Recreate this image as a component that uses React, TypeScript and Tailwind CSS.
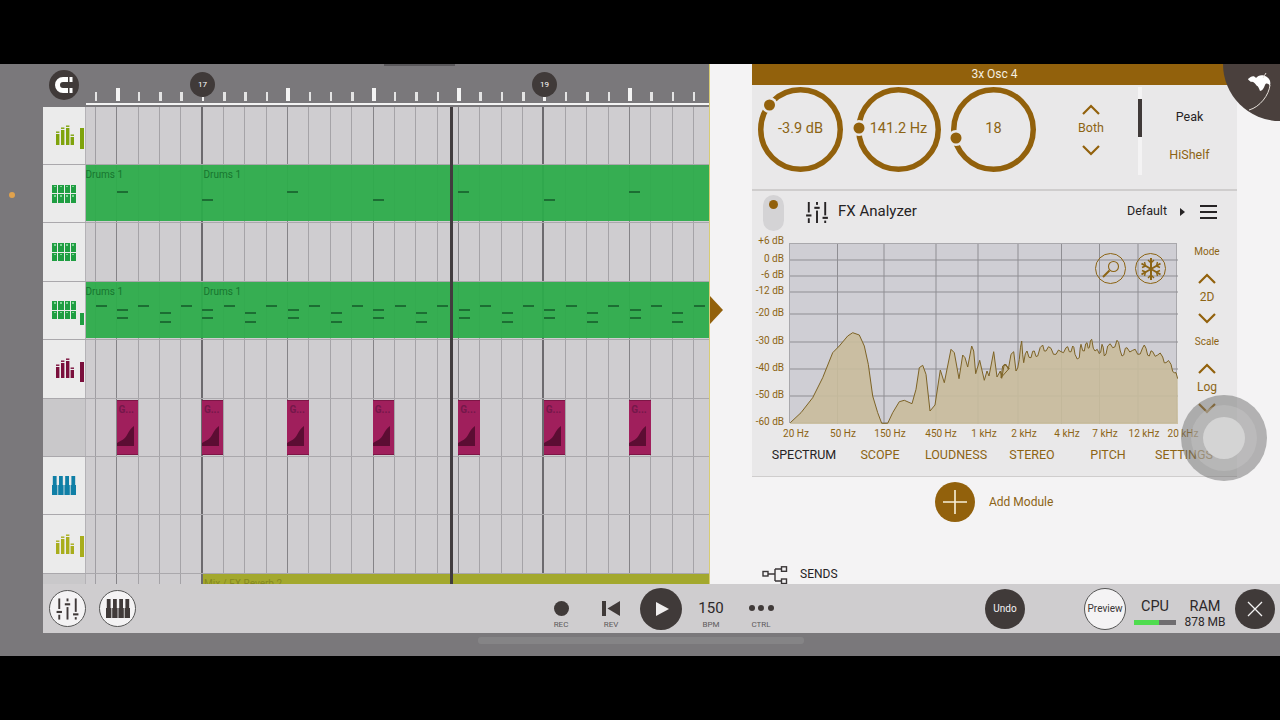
import React from 'react'

const BROWN = '#92610c'
const DARK = '#403a39'

const BEAT = 21.37
const BAR_STARTS = [117, 202.4, 287.9, 373.3, 458.8, 544.2, 629.7]

// zoomed trace of the spectrum, low end then high end
const LOW = [[118,575],[150,545],[185,500],[215,440],[245,365],[265,345],[290,315],[305,305],[325,312],[340,345],[352,400],[365,495],[380,545],[392,577],[410,577],[425,545],[445,512],[460,508],[483,518],[495,475],[505,410],[515,403],[525,430],[537,540],[552,522],[568,417],[580,455],[600,355],[610,365],[624,443],[635,372],[642,380],[650,408],[662,345],[668,360],[674,428],[686,388],[700,448],[708,420],[714,435],[728,362],[738,438],[748,420],[752,442],[760,400],[775,412]]
const HIGH = [[0,440],[5,405],[15,400],[22,415],[30,370],[38,362],[45,420],[55,385],[62,330],[68,395],[78,360],[90,380],[100,360],[110,375],[125,342],[135,360],[150,352],[165,370],[180,362],[195,350],[205,362],[215,345],[222,370],[235,380],[240,340],[250,360],[258,335],[265,350],[272,325],[282,360],[295,368],[303,340],[310,375],[320,345],[335,350],[348,328],[358,360],[368,372],[378,350],[395,358],[410,370],[425,350],[435,352],[445,375],[455,362],[470,372],[485,378],[495,395],[510,400],[520,425],[530,443]]

// the top end is much spikier than the trace, so add a small zigzag between its points
const HIGH_FINE = HIGH.flatMap(([x, y], i) => {
  const next = HIGH[i + 1]
  if (!next || i < 6) return [[x, y]]
  return [[x, y], [(x + next[0]) / 2, (y + next[1]) / 2 + (i % 2 === 0 ? 9 : -9)]]
})

const TRACE = [
  ...LOW.map(([x, y]) => `${(750 + x / 3).toFixed(1)},${(230 + y / 3).toFixed(1)}`),
  ...HIGH_FINE.map(([x, y]) => `${(1000 + x / 3).toFixed(1)},${(230 + y / 3).toFixed(1)}`),
].join(' ')

const DB_LINES = [
  { label: '+6 dB', y: 241 },
  { label: '0 dB', y: 259 },
  { label: '-6 dB', y: 275 },
  { label: '-12 dB', y: 291 },
  { label: '-20 dB', y: 313 },
  { label: '-30 dB', y: 341 },
  { label: '-40 dB', y: 368 },
  { label: '-50 dB', y: 395 },
  { label: '-60 dB', y: 422 },
]
const HZ_LINES = [836.5, 883, 935, 977, 1017, 1060.5, 1098.5, 1137]
const HZ_LABELS = [
  ['20 Hz', 796], ['50 Hz', 843], ['150 Hz', 890], ['450 Hz', 941], ['1 kHz', 984],
  ['2 kHz', 1024], ['4 kHz', 1067], ['7 kHz', 1105], ['12 kHz', 1144], ['20 kHz', 1183],
] as const
const TABS = ['SPECTRUM', 'SCOPE', 'LOUDNESS', 'STEREO', 'PITCH', 'SETTINGS']

function Bars({ color }: { color: string }) {
  return (
    <svg width="20" height="21" viewBox="0 0 20 21" fill={color}>
      <rect x="1" y="9" width="3.4" height="11" />
      <rect x="1" y="6.5" width="3.4" height="1.4" />
      <rect x="6" y="5" width="3.4" height="15" />
      <rect x="6" y="2.5" width="3.4" height="1.4" />
      <rect x="11" y="3" width="3.4" height="17" />
      <rect x="11" y="0.5" width="3.4" height="1.4" />
      <rect x="15.6" y="12" width="3.4" height="8" />
      <rect x="15.6" y="9.5" width="3.4" height="1.4" />
    </svg>
  )
}

function DrumGrid() {
  return (
    <div className="grid grid-cols-4 gap-[1px] w-[24px]">
      {Array.from({ length: 8 }).map((_, i) => (
        <div key={i} className="h-[8.5px] bg-[#1f9e42] border-t-[3px] border-[#1f9e42] relative">
          <div className="absolute left-[1.5px] top-[-2px] w-[2px] h-[1.5px] bg-[#7fd596]" />
        </div>
      ))}
    </div>
  )
}

function Piano({ color, w, h }: { color: string; w: number; h: number }) {
  return (
    <svg width={w} height={h} viewBox="0 0 24 19" fill={color}>
      {[0, 6.2, 12.4, 18.6].map((x) => (
        <rect key={x} x={x} y="9" width="5.4" height="10" />
      ))}
      {[0.8, 7, 13.2, 19.4].map((x) => (
        <rect key={x} x={x} y="0" width="3.8" height="12" />
      ))}
    </svg>
  )
}

function Mixer({ color, w, h }: { color: string; w: number; h: number }) {
  return (
    <svg width={w} height={h} viewBox="0 0 24 22" fill={color}>
      <rect x="2.4" y="0" width="2" height="11" />
      <rect x="0.6" y="13" width="5.6" height="2.2" />
      <rect x="2.4" y="17" width="2" height="5" />
      <rect x="11" y="0" width="2" height="3" />
      <rect x="9.2" y="5" width="5.6" height="2.2" />
      <rect x="11" y="9" width="2" height="13" />
      <rect x="19.6" y="0" width="2" height="14" />
      <rect x="17.8" y="15.5" width="5.6" height="2.2" />
      <rect x="19.6" y="19.5" width="2" height="2.5" />
    </svg>
  )
}

function Chevron({ up }: { up?: boolean }) {
  return (
    <svg width="18" height="11" viewBox="0 0 18 11" fill="none" stroke={BROWN} strokeWidth="2.2">
      <polyline points={up ? '1,10 9,2 17,10' : '1,1 9,9 17,1'} />
    </svg>
  )
}

function Knob({ value, dx, dy }: { value: string; dx: number; dy: number }) {
  return (
    <div className="grid w-[85px] h-[85px] place-items-center shrink-0">
      <svg width="85" height="85" viewBox="0 0 85 85" className="[grid-area:1/1] overflow-visible">
        <circle cx="42.5" cy="42.5" r="39.75" fill="none" stroke={BROWN} strokeWidth="5.5" />
        <circle cx={dx} cy={dy} r="8" fill="#e9e8e9" />
        <circle cx={dx} cy={dy} r="5.5" fill={BROWN} />
      </svg>
      <span className="[grid-area:1/1] mb-[2px] text-[14.5px] text-[#8c6414]">{value}</span>
    </div>
  )
}

function GridRow({ children, header, shaded, height = 'h-[58.4px]' }: {
  children?: React.ReactNode
  header?: React.ReactNode
  shaded?: boolean
  height?: string
}) {
  return (
    <div className={`flex ${height} shrink-0 border-b border-[#aaa8ac]`}>
      <div className={`relative w-[42.5px] shrink-0 flex items-center border-r border-[#b4b2b6] ${shaded ? 'bg-[#c9c8ca]' : 'bg-[#ebebeb]'}`}>
        {header}
      </div>
      <div className="relative flex flex-1 overflow-hidden bg-[#cfcdd0]">
        <div className="w-[10.4px] shrink-0 border-r border-[#a09ea3]" />
        {Array.from({ length: 29 }).map((_, i) => (
          <div
            key={i}
            style={{ width: BEAT }}
            className={`shrink-0 border-r ${i % 16 === 4 ? 'border-r-[2px] border-[#6c6a6e]' : i % 4 === 0 ? 'border-[#858387]' : 'border-[#a5a3a7]'}`}
          />
        ))}
        {children}
      </div>
    </div>
  )
}

function DrumClip({ notes }: { notes: { x: number; y: number }[] }) {
  return (
    <div className="absolute left-0 right-0 top-0 bottom-[1px] bg-[#2dac4b]/95">
      <span className="absolute left-0 top-[4px] text-[10px] leading-[12px] text-[#17752f]">Drums 1</span>
      <span className="absolute left-[118px] top-[4px] text-[10px] leading-[12px] text-[#17752f]">Drums 1</span>
      {notes.map((n, i) => (
        <div key={i} className="absolute w-[11px] h-[2px] bg-[#1c6e33]" style={{ left: n.x - 86, top: n.y }} />
      ))}
    </div>
  )
}

const ROW2_NOTES = BAR_STARTS.map((x, i) => ({ x, y: i % 2 === 0 ? 26 : 34 }))

// the pattern repeats every bar-quarter: one high note, two low, one high, two lower
const ROW4_NOTES = Array.from({ length: 29 }).flatMap((_, i) => {
  const x = 96 + i * BEAT
  const ys = [[23], [27.5, 35], [23], [30.5, 39]][i % 4]
  return ys.map((y) => ({ x, y }))
})

function GateClip({ x }: { x: number }) {
  return (
    <div className="absolute top-[1px] h-[55.5px] w-[21.4px] bg-[#a01f5c] border-t border-b border-[#7d1646] overflow-hidden" style={{ left: x - 86 }}>
      <span className="absolute left-[2px] top-[3px] text-[10px] leading-[12px] font-bold text-[#74184a]">G...</span>
      <svg className="absolute left-0 top-[25px]" width="21" height="20" viewBox="0 0 21 20" fill="#5c0d33">
        <path d="M0 20 L0 17 C5 14 8 13 10 9 C12 5 14 2 17 0 L17 20 Z" />
      </svg>
    </div>
  )
}

function Ruler() {
  return (
    <div className="relative h-[43px] shrink-0 bg-[#7a787b] flex flex-col justify-end pb-[2px]">
      <div className="absolute left-[341px] top-0 w-[71px] h-[2px] bg-[#59575a]" />
      <div className="flex items-end h-[16px] pl-[42.5px]">
        {Array.from({ length: 29 }).map((_, i) => {
          const isBar = i % 16 === 5
          const isBig = i % 4 === 1 && !isBar
          return (
            <div key={i} style={{ width: BEAT }} className="shrink-0 flex justify-center">
              <div className={isBig ? 'w-[4px] h-[13px] bg-[#f4f4f4]' : isBar ? 'w-[2.5px] h-[4px] bg-[#f4f4f4]' : 'w-[2.5px] h-[9px] bg-[#e4e4e4]'} />
            </div>
          )
        })}
      </div>
      <div className="ml-[42.5px] h-[2.5px] mt-[2px] bg-[#f4f4f4]" />
      {[[17, 147], [19, 489]].map(([n, left]) => (
        <div
          key={n}
          className="absolute top-[8px] w-[25px] h-[25px] rounded-full flex items-center justify-center text-[8px] text-white"
          style={{ left, backgroundColor: DARK }}
        >
          {n}
        </div>
      ))}
      <div className="absolute left-[6px] top-[6px] w-[30px] h-[30px] rounded-full flex items-center justify-center" style={{ backgroundColor: DARK }}>
        <svg width="22" height="20" viewBox="0 0 22 20" fill="none">
          <path d="M15 4.5 H10 A5.5 5.5 0 0 0 10 15.5 H15" stroke="white" strokeWidth="5" />
          <rect x="16.5" y="2" width="3" height="5" fill="white" />
          <rect x="16.5" y="13" width="3" height="5" fill="white" />
        </svg>
      </div>
    </div>
  )
}

function Timeline() {
  return (
    <div className="relative w-[666px] shrink-0 flex flex-col overflow-hidden bg-[#7a787b]">
      <Ruler />
      <GridRow height="h-[58px]" header={
        <>
          <div className="ml-[12px]"><Bars color="#7fa30c" /></div>
          <div className="absolute left-[37px] top-[21px] w-[4px] h-[21px] bg-[#7fa30c]" />
        </>
      } />
      <GridRow header={<div className="ml-[9px]"><DrumGrid /></div>}>
        <DrumClip notes={ROW2_NOTES} />
      </GridRow>
      <GridRow header={<div className="ml-[9px]"><DrumGrid /></div>} />
      <GridRow header={
        <>
          <div className="ml-[9px]"><DrumGrid /></div>
          <div className="absolute left-[37px] top-[31px] w-[3.5px] h-[12px] bg-[#1f9e42]" />
        </>
      }>
        <DrumClip notes={ROW4_NOTES} />
      </GridRow>
      <GridRow header={
        <>
          <div className="ml-[12px]"><Bars color="#7a0f3c" /></div>
          <div className="absolute left-[37px] top-[22px] w-[4px] h-[20px] bg-[#7a0f3c]" />
        </>
      } />
      <GridRow shaded>
        {BAR_STARTS.map((x) => <GateClip key={x} x={x} />)}
      </GridRow>
      <GridRow header={<div className="ml-[9px]"><Piano color="#0f7fa6" w={24} h={19} /></div>} />
      <GridRow header={
        <>
          <div className="ml-[12px]"><Bars color="#a8ad1c" /></div>
          <div className="absolute left-[37px] top-[21px] w-[4px] h-[21px] bg-[#a8ad1c]" />
        </>
      } />
      <GridRow shaded height="h-[11px]">
        <div className="absolute left-[117.5px] right-0 top-0 bottom-0 bg-[#a3a82d] overflow-hidden">
          <span className="absolute left-[1px] top-[4px] text-[10px] leading-[12px] text-[#85881f] whitespace-nowrap">Mix / FX Reverb 2</span>
        </div>
      </GridRow>
      {/* playhead */}
      <div className="absolute left-[406.5px] top-[43px] bottom-0 w-[3.5px] bg-[#413c3e]" />
    </div>
  )
}

function Plot() {
  return (
    <div className="relative w-[388px] h-[180px] mt-[8px] shrink-0 bg-[#cfced4] border border-[#a9a8ac]">
      <svg className="absolute inset-0" width="388" height="180" viewBox="789 243 388 180">
        {DB_LINES.slice(1, -1).map((l) => (
          <line key={l.y} x1="789" x2="1177" y1={l.y} y2={l.y} stroke="#8f8e93" strokeWidth="1" />
        ))}
        {HZ_LINES.map((x) => (
          <line key={x} x1={x} x2={x} y1="243" y2="423" stroke="#8f8e93" strokeWidth="1" />
        ))}
        <polygon points={`789.3,423 ${TRACE} 1177,423`} fill="#c9bd9c" fillOpacity="0.9" />
        <polyline points={TRACE} fill="none" stroke="#7d6326" strokeWidth="1" />
      </svg>
      <div className="absolute left-[305px] top-[9px] w-[31px] h-[31px] rounded-full border border-[#8c6414] flex items-center justify-center">
        <svg width="22" height="22" viewBox="0 0 22 22" fill="none" stroke="#8c6414">
          <circle cx="13.5" cy="8.5" r="5" strokeWidth="1.1" />
          <path d="M9.5 12.5 L3 19" strokeWidth="2" />
        </svg>
      </div>
      <div className="absolute left-[345px] top-[9px] w-[31px] h-[31px] rounded-full border border-[#8c6414] flex items-center justify-center">
        <svg width="24" height="24" viewBox="0 0 24 24" fill="none" stroke="#8c6414" strokeWidth="2">
          <path d="M12 1 V23 M2.5 6.5 L21.5 17.5 M21.5 6.5 L2.5 17.5" />
          <path d="M9 3 L12 6 L15 3 M9 21 L12 18 L15 21 M3 10.5 L6.5 9 L5.5 5 M21 10.5 L17.5 9 L18.5 5 M3 13.5 L6.5 15 L5.5 19 M21 13.5 L17.5 15 L18.5 19" strokeWidth="1.4" />
        </svg>
      </div>
    </div>
  )
}

function Analyzer() {
  return (
    <div className="flex flex-col bg-[#e9e8e9] border-b border-[#cfcdcd]">
      <div className="relative flex h-[198px]">
        <div className="w-[37px] shrink-0 relative">
          {DB_LINES.map((l) => (
            <span
              key={l.label}
              className="absolute right-[5px] text-[10px] leading-[12px] text-[#8c6414] whitespace-nowrap"
              style={{ top: l.y - 235 - 6 }}
            >
              {l.label}
            </span>
          ))}
        </div>
        <Plot />
        <div className="flex-1 flex flex-col items-center pt-[11px] text-[#8c6414]">
          <span className="text-[10px] leading-[12px]">Mode</span>
          <div className="mt-[14.5px]"><Chevron up /></div>
          <span className="text-[12px] leading-[14px] mt-[6.5px]">2D</span>
          <div className="mt-[8.5px]"><Chevron /></div>
          <span className="text-[10px] leading-[12px] mt-[12.5px]">Scale</span>
          <div className="mt-[14.5px]"><Chevron up /></div>
          <span className="text-[12px] leading-[14px] mt-[6.5px]">Log</span>
          <div className="mt-[8.5px]"><Chevron /></div>
        </div>
        {HZ_LABELS.map(([t, x]) => (
          <span
            key={t}
            className="absolute top-[193px] -translate-x-1/2 text-[10px] leading-[12px] text-[#8c6414] whitespace-nowrap"
            style={{ left: x - 752 }}
          >
            {t}
          </span>
        ))}
      </div>
      <div className="grid grid-cols-6 w-[456px] ml-[14px] h-[43px] pt-[14px]">
        {TABS.map((t, i) => (
          <span key={t} className={`text-center text-[12.5px] leading-[16px] ${i === 0 ? 'text-[#262324]' : 'text-[#8c6414]'}`}>{t}</span>
        ))}
      </div>
    </div>
  )
}

function RightPanel() {
  return (
    <div className="relative flex-1 bg-[#f4f3f4] border-l border-[#d8cc74] overflow-hidden pl-[42px]">
      <div className="w-[485px] flex flex-col">
        <div className="h-[21px] flex items-center justify-center pb-[2px] text-[12px] text-[#f5efe0]" style={{ backgroundColor: BROWN }}>3x Osc 4</div>
        <div className="h-[106px] bg-[#e9e8e9] border-b-[2px] border-[#cfcdcd] flex items-start pt-[2px] pl-[6px]">
          <Knob value="-3.9 dB" dx={11.5} dy={18} />
          <div className="w-[13px] shrink-0" />
          <Knob value="141.2 Hz" dx={3} dy={41} />
          <div className="w-[10px] shrink-0" />
          <Knob value="18" dx={5} dy={51} />
          <div className="w-[40px] shrink-0 ml-[35px] flex flex-col items-center pt-[16.5px] text-[#8c6414]">
            <Chevron up />
            <span className="text-[12.5px] leading-[16px] mt-[5.5px]">Both</span>
            <div className="mt-[8.5px]"><Chevron /></div>
          </div>
          <div className="ml-[27px] w-[4px] h-[88px] bg-[#f4f3f4] shrink-0 pt-[12px]">
            <div className="h-[38px] w-[4px]" style={{ backgroundColor: DARK }} />
          </div>
          <div className="flex-1 flex flex-col items-center pt-[22px] text-[12.5px] leading-[16px]">
            <span className="text-[#262324]">Peak</span>
            <span className="text-[#8c6414] mt-[22px]">HiShelf</span>
          </div>
        </div>
        <div className="h-[44px] bg-[#e9e8e9] flex items-start">
          <div className="ml-[11px] mt-[4px] w-[21px] h-[36px] rounded-full bg-[#d4d3d5] flex justify-center pt-[5px] shrink-0">
            <div className="w-[9px] h-[9px] rounded-full" style={{ backgroundColor: BROWN }} />
          </div>
          <div className="ml-[21px] mt-[11px]"><Mixer color="#262324" w={24} h={21} /></div>
          <span className="ml-[9px] mt-[11px] text-[15px] leading-[18px] text-[#262324]">FX Analyzer</span>
          <span className="ml-auto mt-[12px] text-[12.5px] leading-[16px] text-[#262324]">Default</span>
          <div className="ml-[13px] mt-[17px] w-0 h-0 border-y-[4.5px] border-y-transparent border-l-[5px] border-l-[#262324]" />
          <div className="ml-[15px] mr-[20px] mt-[14px] w-[17px] flex flex-col gap-[4px]">
            <div className="h-[2px] bg-[#262324]" />
            <div className="h-[2px] bg-[#262324]" />
            <div className="h-[2px] bg-[#262324]" />
          </div>
        </div>
        <Analyzer />
        <div className="h-[50px] flex items-center">
          <div className="ml-[183px] w-[40px] h-[40px] rounded-full flex items-center justify-center shrink-0" style={{ backgroundColor: BROWN }}>
            <svg width="24" height="24" viewBox="0 0 24 24" stroke="#f8f0d8" strokeWidth="1.6"><path d="M12 0 V24 M0 12 H24" /></svg>
          </div>
          <span className="ml-[14px] text-[12px] text-[#8c6414]">Add Module</span>
        </div>
        <div className="mt-[39px] flex items-start ml-[10px] h-[18px]">
          <svg width="26" height="18" viewBox="0 0 26 18" fill="none" stroke="#3a3637" strokeWidth="1.4">
            <rect x="1" y="5.5" width="5" height="4.5" />
            <path d="M6 8 H13 M13 3 V15 M13 3 H19 M13 15 H19" />
            <rect x="19.5" y="0.8" width="5" height="4.5" />
            <rect x="19.5" y="13" width="5" height="4.5" />
          </svg>
          <span className="ml-[12px] text-[12px] leading-[16px] text-[#262324]">SENDS</span>
        </div>
      </div>
      {/* logo badge */}
      <div className="absolute -right-[57px] -top-[57px] w-[114px] h-[114px] rounded-full" style={{ backgroundColor: '#4a403d' }}>
        <svg className="absolute left-[23px] top-[64px]" width="30" height="44" viewBox="0 0 30 44" fill="none">
          <path d="M2 8 C5 5 8 4 10 7 C12 4 17 3 21 6 C24 8 25 11 24 15 C22 12 20 12 19 14 C18 17 16 20 14 20 C13 17 12 15 11 15 C9 13 8 10 5 11 C4 10 2 9 2 8 Z" fill="white" />
          <path d="M20 2 C19 4 18 5 17 7 M24 14 C23 24 14 36 3 39" stroke="#e8e2dc" strokeWidth="1" />
        </svg>
      </div>
    </div>
  )
}

function TransportLabel({ children }: { children: string }) {
  return <span className="text-[8px] leading-[10px] text-[#5e5a5b] mt-[2px]">{children}</span>
}

function BottomBar() {
  return (
    <div className="h-[49px] shrink-0 bg-[#cfcdcf] flex items-center pl-[6px]">
      <div className="w-[37px] h-[37px] rounded-full bg-[#f4f3f4] border border-[#555] flex items-center justify-center shrink-0">
        <Mixer color={DARK} w={23} h={22} />
      </div>
      <div className="ml-[13px] w-[37px] h-[37px] rounded-full bg-[#f4f3f4] border border-[#555] flex items-center justify-center shrink-0">
        <Piano color={DARK} w={24} h={19} />
      </div>
      <div className="ml-[405px] w-[40px] self-start mt-[14px] flex flex-col items-center">
        <div className="h-[20px] flex items-center"><div className="w-[15px] h-[15px] rounded-full" style={{ backgroundColor: DARK }} /></div>
        <TransportLabel>REC</TransportLabel>
      </div>
      <div className="ml-[10px] w-[40px] self-start mt-[14px] flex flex-col items-center">
        <div className="h-[20px] flex items-center">
          <svg width="18" height="15" viewBox="0 0 18 15" fill={DARK}><rect width="4" height="15" /><path d="M18 0 V15 L5.5 7.5 Z" /></svg>
        </div>
        <TransportLabel>REV</TransportLabel>
      </div>
      <div className="ml-[9px] w-[42px] h-[42px] rounded-full flex items-center justify-center shrink-0" style={{ backgroundColor: DARK }}>
        <svg width="15" height="16" viewBox="0 0 15 16" fill="#efeded" className="ml-[2px]"><path d="M1 1 L14 8 L1 15 Z" /></svg>
      </div>
      <div className="ml-[9px] w-[40px] self-start mt-[14px] flex flex-col items-center">
        <div className="h-[20px] flex items-center text-[15px] text-[#2c2829]">150</div>
        <TransportLabel>BPM</TransportLabel>
      </div>
      <div className="ml-[10px] w-[40px] self-start mt-[14px] flex flex-col items-center">
        <div className="h-[20px] flex items-center gap-[3.5px]">
          <div className="w-[6px] h-[6px] rounded-full" style={{ backgroundColor: DARK }} />
          <div className="w-[6px] h-[6px] rounded-full" style={{ backgroundColor: DARK }} />
          <div className="w-[6px] h-[6px] rounded-full" style={{ backgroundColor: DARK }} />
        </div>
        <TransportLabel>CTRL</TransportLabel>
      </div>
      <div className="ml-[204px] w-[40px] h-[40px] rounded-full flex items-center justify-center text-[10px] text-[#f4f3f4] shrink-0" style={{ backgroundColor: DARK }}>Undo</div>
      <div className="ml-[59px] w-[42px] h-[42px] rounded-full bg-[#f4f3f4] border border-[#555] flex items-center justify-center text-[10px] text-[#3a3637] shrink-0">Preview</div>
      <div className="ml-[8px] w-[42px] self-start mt-[14px] flex flex-col items-center shrink-0">
        <span className="text-[14.5px] leading-[18px] text-[#2c2829]">CPU</span>
        <div className="w-[42px] h-[4.5px] mt-[4px] bg-[#6f6d70]">
          <div className="h-full bg-[#4fdc4f]" style={{ width: '60%' }} />
        </div>
      </div>
      <div className="ml-[4px] w-[50px] self-start mt-[14px] flex flex-col items-center shrink-0">
        <span className="text-[14.5px] leading-[18px] text-[#2c2829]">RAM</span>
        <span className="text-[12px] leading-[14px] -mt-[1px] text-[#2c2829] whitespace-nowrap">878 MB</span>
      </div>
      <div className="ml-[5px] w-[40px] h-[40px] rounded-full flex items-center justify-center shrink-0" style={{ backgroundColor: DARK }}>
        <svg width="16" height="16" viewBox="0 0 16 16" stroke="#f4f3f4" strokeWidth="1.3"><path d="M1 1 L15 15 M15 1 L1 15" /></svg>
      </div>
    </div>
  )
}

export default function App() {
  return (
    <div className="relative w-[1280px] h-[720px] overflow-hidden bg-black flex flex-col font-['Roboto',sans-serif]">
      <div className="h-[64px] shrink-0" />
      <div className="h-[592px] flex bg-[#7a787b]">
        <div className="w-[43px] shrink-0 pt-[128px] pl-[9px]">
          <div className="w-[6px] h-[6px] rounded-full bg-[#e0a24d]" />
        </div>
        <div className="flex-1 flex flex-col min-w-0">
          <div className="h-[520px] flex shrink-0">
            <Timeline />
            <RightPanel />
          </div>
          <BottomBar />
          <div className="pl-[435px] pt-[4px]">
            <div className="w-[326px] h-[7px] rounded-[3px] bg-[#858486]" />
          </div>
        </div>
      </div>
      {/* arrow tab on the panel edge */}
      <div className="absolute left-[710px] top-[296px] w-0 h-0 border-y-[14px] border-y-transparent border-l-[13px] border-l-[#92610c]" />
      {/* floating assistive touch */}
      <div className="absolute left-[1181px] top-[395px] w-[86px] h-[86px] rounded-full bg-[#6f6f6f]/50 flex items-center justify-center">
        <div className="w-[66px] h-[66px] rounded-full bg-[#c8c8c8]/40 flex items-center justify-center">
          <div className="w-[42px] h-[42px] rounded-full bg-[#d4d4d4]" />
        </div>
      </div>
    </div>
  )
}
